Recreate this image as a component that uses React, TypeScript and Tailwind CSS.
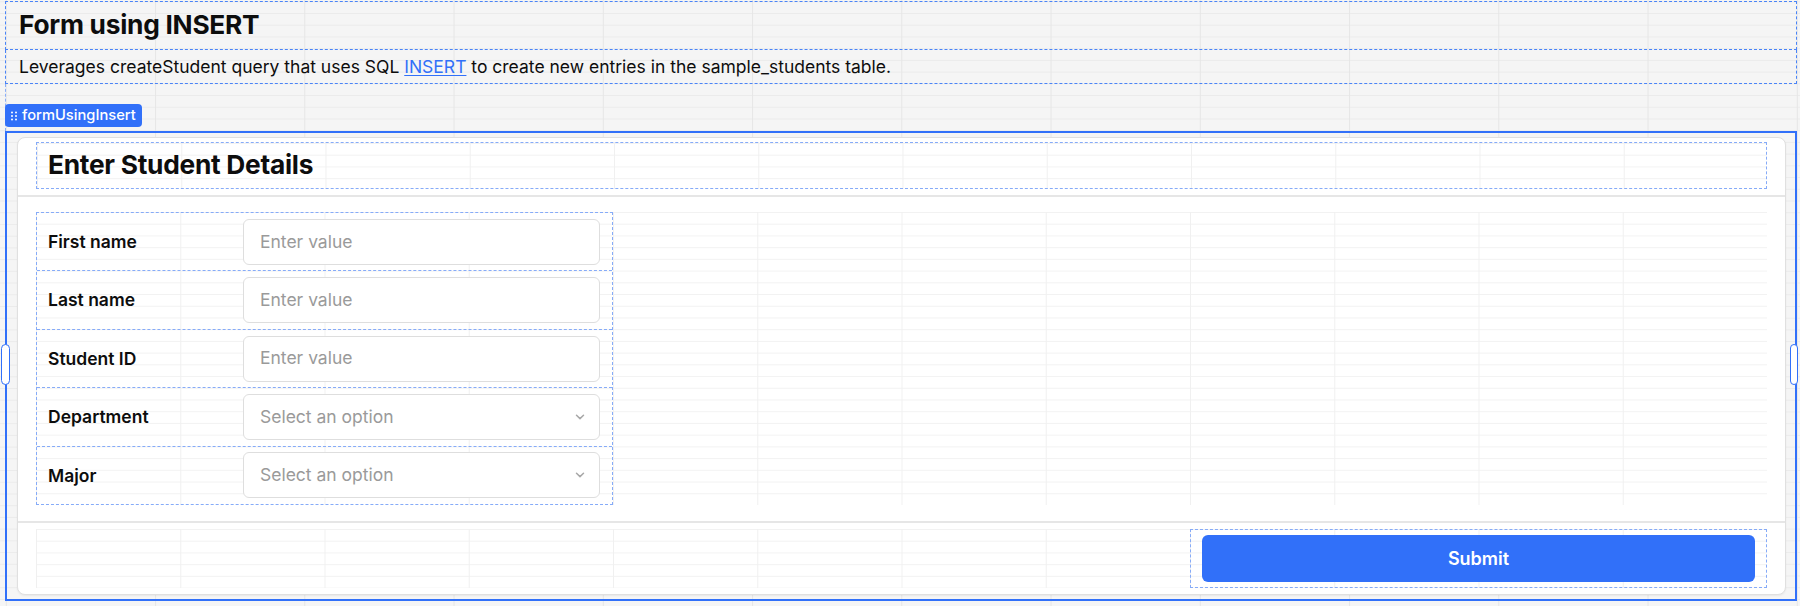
import React from "react";

const outerGrid =
  "bg-[linear-gradient(to_right,#e6e6e6_1px,transparent_1px),linear-gradient(to_bottom,#ebebeb_1px,transparent_1px)] bg-size-[149.25px_11.72px] bg-position-[5.8px_1.3px]";
const innerGrid =
  "bg-[linear-gradient(to_right,#f0f0f0_1px,transparent_1px),linear-gradient(to_bottom,#f2f2f2_1px,transparent_1px)] bg-size-[144.25px_11.72px]";

function Chevron() {
  return (
    <svg width="10" height="6" viewBox="0 0 10 6" fill="none" className="shrink-0">
      <path d="M1.5 1.2L5 4.6L8.5 1.2" stroke="#a8a8a8" strokeWidth="1.5" strokeLinecap="round" strokeLinejoin="round" />
    </svg>
  );
}

function Grip() {
  return (
    <svg width="6" height="10" viewBox="0 0 6 10" className="shrink-0">
      {[1, 5].map((x) =>
        [1.5, 5, 8.5].map((y) => <circle key={`${x}-${y}`} cx={x} cy={y} r="1" fill="white" />)
      )}
    </svg>
  );
}

type Field = { label: string; placeholder: string; select?: boolean };

const fields: Field[] = [
  { label: "First name", placeholder: "Enter value" },
  { label: "Last name", placeholder: "Enter value" },
  { label: "Student ID", placeholder: "Enter value" },
  { label: "Department", placeholder: "Select an option", select: true },
  { label: "Major", placeholder: "Select an option", select: true },
];

export default function App() {
  return (
    <div
      className={`w-[1800px] h-[606px] overflow-hidden bg-[#f5f5f5] ${outerGrid} font-['Inter','Liberation_Sans',sans-serif] text-[#0d0d0d]`}
    >
      <div className="flex flex-col pl-[5px] pr-[3px] pt-[1px]">
        {/* Title */}
        <div className="h-[49px] border border-dashed border-[#4a84f7] flex items-center pl-[13px]">
          <h1 className="text-[26.3px] leading-none font-bold tracking-[-0.01em]">Form using INSERT</h1>
        </div>
        {/* Description */}
        <div className="h-[34px] border border-t-0 border-dashed border-[#4a84f7] flex items-center pl-[13px] text-[17.5px] leading-none">
          <span>
            Leverages createStudent query that uses SQL{" "}
            <a className="text-[#3170f9] underline underline-offset-[2px]">INSERT</a> to create new entries in the
            sample_students table.
          </span>
        </div>
        {/* Badge */}
        <div className="h-[47px] flex items-end pb-[4px] border-l border-dashed border-[#8aaef8]">
          <div className="h-[23px] flex items-center gap-[5px] bg-[#3170f9] rounded-[4px] pl-[6px] pr-[6px] text-white text-[14.7px] leading-none font-medium -ml-px">
            <Grip />
            <span>formUsingInsert</span>
          </div>
        </div>
        {/* Selected container */}
        <div className="relative h-[470px] border-2 border-[#3170f9] pl-[10px] pr-[9px] pt-[4px] pb-[4px]">
          <div className="absolute left-[-6px] top-[211px] w-[9px] h-[41px] rounded-full border-[1.5px] border-[#3170f9] bg-white" />
          <div className="absolute right-[-3px] top-[211px] w-[8px] h-[41px] rounded-full border-[1.5px] border-[#3170f9] bg-white" />
          {/* Card */}
          <div className="h-full flex flex-col bg-white border border-[#e0e0e0] rounded-[8px] shadow-[0_1px_2px_rgba(0,0,0,0.06)]">
            {/* Header */}
            <div className="px-[18px] pt-[4px] pb-[6px] border-b-2 border-[#e6e6e6]">
              <div className={`h-[47px] border border-dashed border-[#86abf8] ${innerGrid} flex items-center pl-[11px]`}>
                <h2 className="text-[26.3px] leading-none font-bold tracking-[-0.01em]">Enter Student Details</h2>
              </div>
            </div>
            {/* Body */}
            <div className="px-[18px] pt-[15px] pb-[16px] border-b-2 border-[#e6e6e6]">
              <div className={`h-[293px] ${innerGrid}`}>
                <div className="w-[577px] h-full flex flex-col border border-dashed border-[#86abf8]">
                  {fields.map((f, i) => (
                    <div
                      key={f.label}
                      className={`flex-1 flex items-center pl-[11px] pr-[12px] ${
                        i < fields.length - 1 ? "border-b border-dashed border-[#86abf8]" : ""
                      }`}
                    >
                      <div className="w-[195px] text-[17.5px] font-semibold leading-none">{f.label}</div>
                      <div className="flex-1 h-[46px] bg-white border border-[#dedede] rounded-[6px] flex items-center justify-between pl-[16px] pr-[14px] text-[17.5px] text-[#9a9a9a]">
                        <span>{f.placeholder}</span>
                        {f.select && <Chevron />}
                      </div>
                    </div>
                  ))}
                </div>
              </div>
            </div>
            {/* Footer */}
            <div className="px-[18px] pt-[6px] pb-[6px]">
              <div className={`h-[59px] ${innerGrid} flex justify-end`}>
                <div className="w-[577px] h-full border border-dashed border-[#86abf8] px-[11px] py-[5px]">
                  <button className="w-full h-full rounded-[6px] bg-[#3170f9] text-white text-[18px] font-semibold">
                    Submit
                  </button>
                </div>
              </div>
            </div>
          </div>
        </div>
      </div>
    </div>
  );
}
